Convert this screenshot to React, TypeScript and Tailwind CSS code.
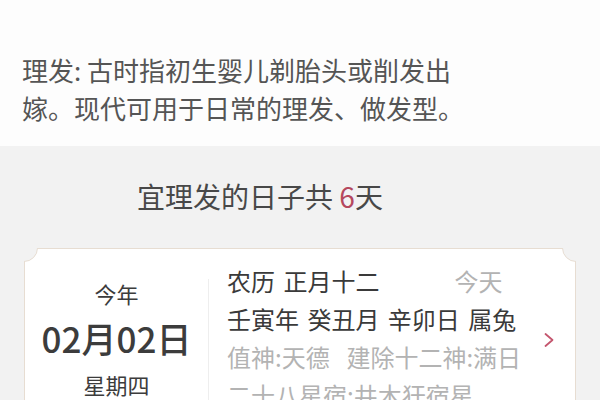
const font = { fontFamily: '"Noto Sans CJK SC", "Noto Sans", sans-serif' }

function Corner({ className }: { className: string }) {
  // concave notch at a card corner
  return (
    <div
      className={`absolute h-[28px] w-[28px] rounded-full border border-[#e7ddd2] bg-[#f2f2f2] ${className}`}
    />
  )
}

export default function App() {
  return (
    <div className="h-[400px] w-[600px] overflow-hidden bg-[#f2f2f2]" style={font}>
      {/* Description */}
      <section className="h-[146px] bg-[#fdfdfd] pl-[22px] pt-[51px]">
        <p className="text-[26px] leading-[38px] text-[#555]">
          理发: 古时指初生婴儿剃胎头或削发出
          <br />
          嫁。现代可用于日常的理发、做发型。
        </p>
      </section>

      {/* Title */}
      <div className="pt-[30px] pr-[80px] text-center text-[28px] leading-[40px] text-[#484848]">
        宜理发的日子共 <span className="text-[#b5485e]">6</span>天
      </div>

      {/* Day card */}
      <div className="relative mx-[24px] mt-[32px] overflow-hidden">
        <div className="border border-[#e7ddd2] bg-white">
          <div className="flex">
            <div className="flex w-[183px] flex-col items-center pt-[29px] text-[#3c3c3c]">
              <div className="text-[22px] leading-[30px]">今年</div>
              <div className="mt-[8px] text-[35px] font-medium leading-[44px]">02月02日</div>
              <div className="mt-[9px] text-[22px] leading-[30px]">星期四</div>
            </div>

            <div className="mt-[30px] h-[140px] w-px bg-[#eeeeee]" />

            <div className="flex-1 pl-[18px] pt-[13px] text-[24px] leading-[38px] [word-spacing:3px]">
              <div className="flex text-[#3a3a3a]">
                <span>农历 正月十二</span>
                <span className="ml-[75px] text-[#b3b3b3]">今天</span>
              </div>
              <div className="text-[#3a3a3a]">壬寅年 癸丑月 辛卯日 属兔</div>
              <div className="text-[#b3b3b3]">值神:天德&nbsp;&nbsp;建除十二神:满日</div>
              <div className="text-[#b3b3b3]">二十八星宿:井木犴宿星</div>
            </div>

            <div className="w-[32px] pt-[83px]">
              <svg viewBox="0 0 12 16" className="h-[16px] w-[12px]" fill="none" stroke="#c4566e" strokeWidth="1.8" strokeLinecap="round" strokeLinejoin="round">
                <path d="M2.5 2l7 6-7 6" />
              </svg>
            </div>
          </div>
        </div>
        <Corner className="-left-[14px] -top-[14px]" />
        <Corner className="-right-[14px] -top-[14px]" />
      </div>
    </div>
  )
}
